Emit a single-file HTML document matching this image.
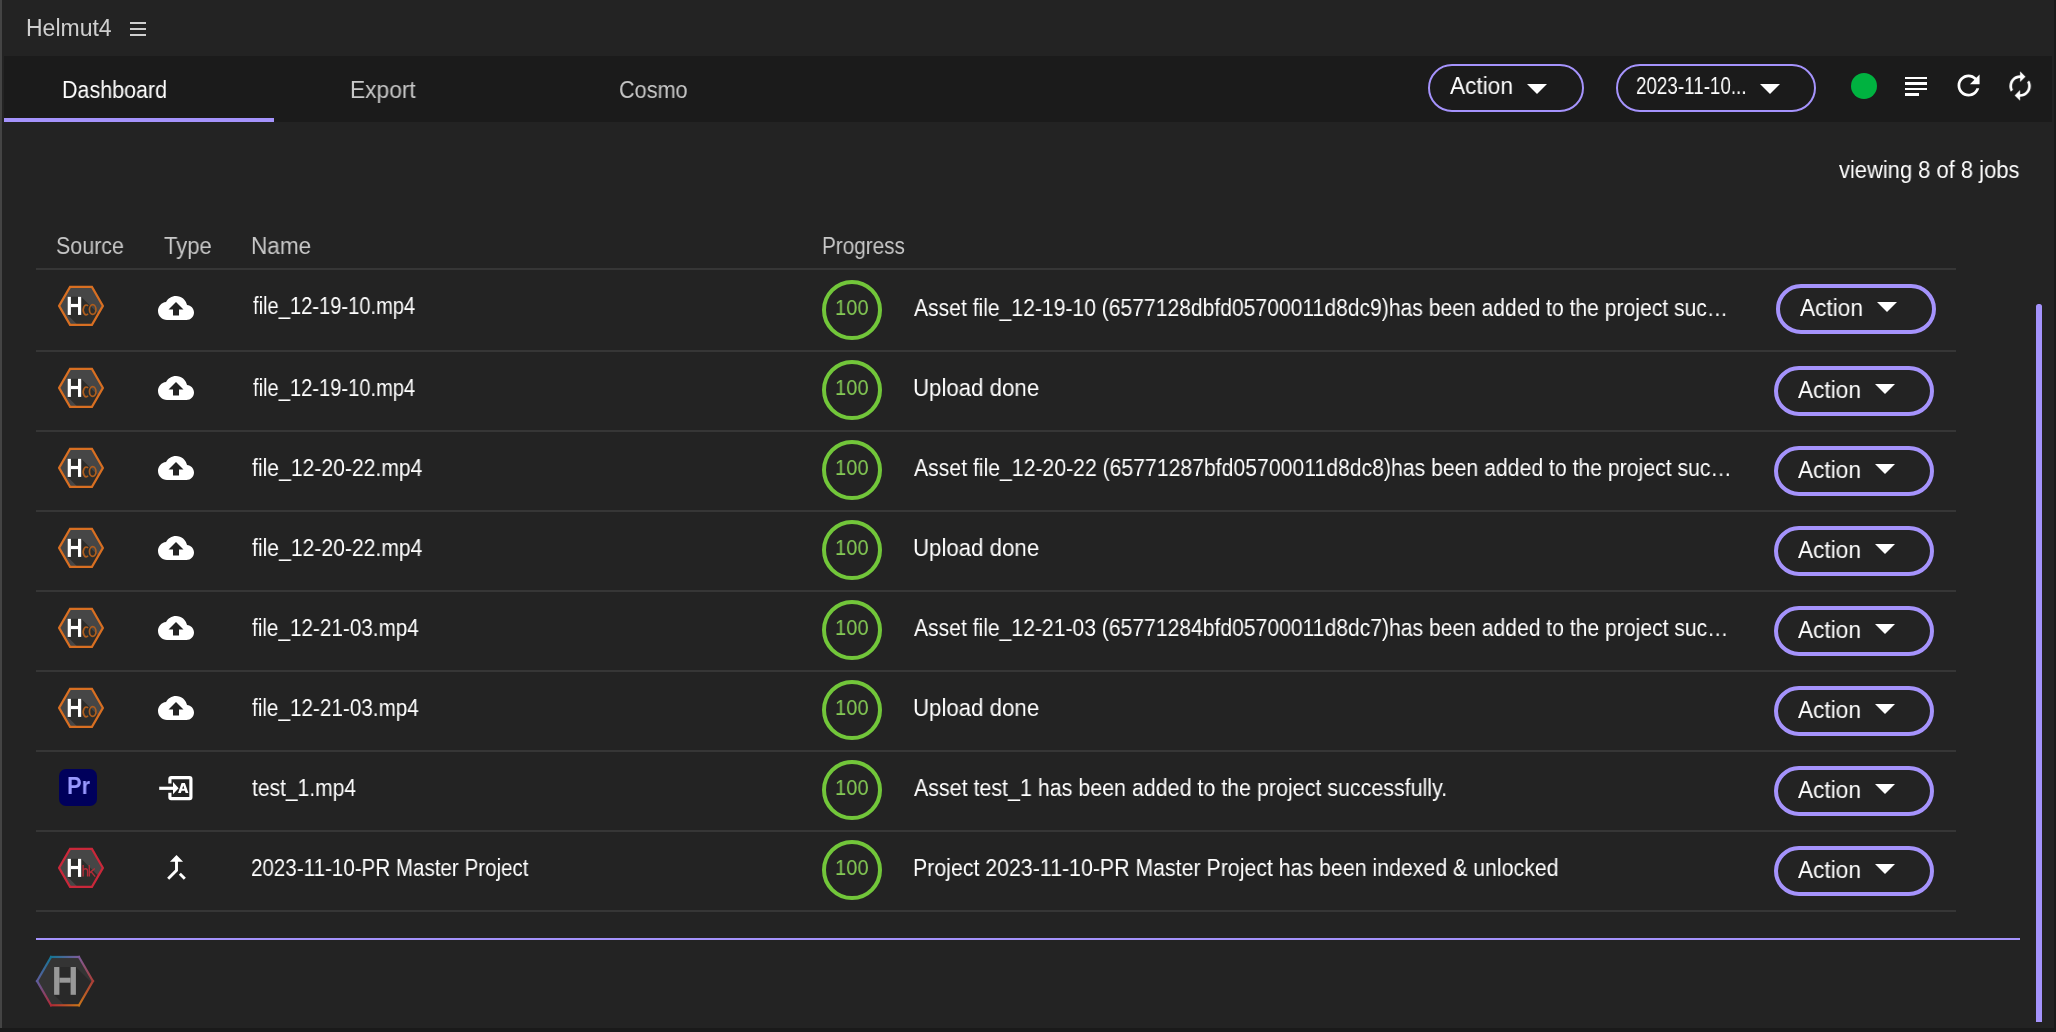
<!DOCTYPE html>
<html><head><meta charset="utf-8"><style>
html,body{margin:0;padding:0;background:#1a1a1a;width:2056px;height:1032px;overflow:hidden}
.panel{position:absolute;left:0;top:0;width:2054px;height:1028px;background:#232323}
.t{position:absolute;white-space:nowrap;font-family:"Liberation Sans",sans-serif;transform-origin:0 0;will-change:transform}
.a{position:absolute;overflow:visible;will-change:transform}
.btn{position:absolute;border-style:solid;border-color:#a593fc;box-sizing:content-box}
.tri{position:absolute;width:0;height:0;border-left:10px solid transparent;border-right:10px solid transparent;border-top:10.5px solid #fff}
.div{position:absolute;left:36px;width:1920px;height:2px;background:#363636}
</style></head><body>
<div class="panel"></div>
<div style="position:absolute;left:0;top:0;width:2px;height:1028px;background:#444"></div>
<div style="position:absolute;left:4px;top:56px;width:2048px;height:66px;background:#1b1b1b"></div>
<div style="position:absolute;left:4px;top:118px;width:270px;height:4px;background:#a593fc"></div>
<div class="t" style="left:25.84px;top:16.53px;font-size:23px;line-height:23px;color:#cfcfcf;transform:scaleX(1.0001);" id="helmut">Helmut4</div>
<div style="position:absolute;left:130px;top:22px;width:16px;height:2px;background:#cfcfcf"></div>
<div style="position:absolute;left:130px;top:28px;width:16px;height:2px;background:#cfcfcf"></div>
<div style="position:absolute;left:130px;top:34px;width:16px;height:2px;background:#cfcfcf"></div>
<div class="t" style="left:61.8px;top:78.53px;font-size:23px;line-height:23px;color:#fff;transform:scaleX(0.9336);" id="dash">Dashboard</div>
<div class="t" style="left:350.47px;top:78.53px;font-size:23px;line-height:23px;color:#c8c8c8;transform:scaleX(0.9889);" id="export">Export</div>
<div class="t" style="left:619.39px;top:78.53px;font-size:23px;line-height:23px;color:#c8c8c8;transform:scaleX(0.9413);" id="cosmo">Cosmo</div>
<div class="btn" style="left:1428px;top:64px;width:152px;height:44px;border-width:2px;border-radius:24.0px"></div>
<div class="t" style="left:1450.4px;top:74.53px;font-size:23px;line-height:23px;color:#fff;transform:scaleX(0.9845);" id="hact">Action</div>
<div class="tri" style="left:1527px;top:83.5px"></div>
<div class="btn" style="left:1616px;top:64px;width:196px;height:44px;border-width:2px;border-radius:24.0px"></div>
<div class="t" style="left:1636.32px;top:74.53px;font-size:23px;line-height:23px;color:#fff;transform:scaleX(0.8181);" id="hdate">2023-11-10...</div>
<div class="tri" style="left:1760px;top:83.5px"></div>
<div style="position:absolute;left:1851px;top:73px;width:26px;height:26px;border-radius:50%;background:#00b240"></div>
<div style="position:absolute;left:1905px;top:76.6px;width:22px;height:2.5px;background:#fff"></div>
<div style="position:absolute;left:1905px;top:82.2px;width:22px;height:2.5px;background:#fff"></div>
<div style="position:absolute;left:1905px;top:87.6px;width:22px;height:2.5px;background:#fff"></div>
<div style="position:absolute;left:1905px;top:93.1px;width:14px;height:2.5px;background:#fff"></div>
<svg class="a" style="left:1951.7px;top:69.4px;" width="33.1" height="33.1" viewBox="0 0 24 24"><path d="M17.65 6.35C16.2 4.9 14.21 4 12 4c-4.42 0-7.99 3.58-7.99 8s3.57 8 7.99 8c3.73 0 6.84-2.55 7.73-6h-2.08c-.82 2.33-3.04 4-5.65 4-3.31 0-6-2.69-6-6s2.69-6 6-6c1.66 0 3.14.69 4.22 1.78L13 11h7V4l-2.35 2.35z" fill="#fff"/></svg>
<svg class="a" style="left:2003.8px;top:69.9px;transform:scaleX(-1)" width="32.2" height="32.2" viewBox="0 0 24 24"><path d="M12 4V1L8 5l4 4V6c3.31 0 6 2.69 6 6 0 1.01-.25 1.97-.7 2.8l1.46 1.46C19.54 15.03 20 13.57 20 12c0-4.42-3.58-8-8-8zm0 14c-3.31 0-6-2.69-6-6 0-1.01.25-1.97.7-2.8L5.24 7.74C4.46 8.97 4 10.43 4 12c0 4.42 3.58 8 8 8v3l4-4-4-4v3z" fill="#fff"/></svg>
<div class="t" style="left:1839.0px;top:158.53px;font-size:23px;line-height:23px;color:#fff;transform:scaleX(0.9533);" id="viewing">viewing 8 of 8 jobs</div>
<div class="t" style="left:55.6px;top:234.53px;font-size:23px;line-height:23px;color:#c8c8c8;transform:scaleX(0.9328);" id="hsrc">Source</div>
<div class="t" style="left:164.0px;top:234.53px;font-size:23px;line-height:23px;color:#c8c8c8;transform:scaleX(0.9586);" id="htype">Type</div>
<div class="t" style="left:251.38px;top:234.53px;font-size:23px;line-height:23px;color:#c8c8c8;transform:scaleX(0.981);" id="hname">Name</div>
<div class="t" style="left:821.76px;top:234.53px;font-size:23px;line-height:23px;color:#c8c8c8;transform:scaleX(0.9011);" id="hprog">Progress</div>
<div class="div" style="top:268px"></div>
<div class="div" style="top:350px"></div>
<svg class="a" style="left:55.00px;top:283.08px" width="52.00" height="45.84"><defs><clipPath id="c306"><polygon points="4.10,22.92 15.05,3.95 36.95,3.95 47.90,22.92 36.95,41.88 15.05,41.88"/></clipPath></defs><polygon points="4.10,22.92 15.05,3.95 36.95,3.95 47.90,22.92 36.95,41.88 15.05,41.88" fill="#464646"/><polygon points="12.70,13.82 26.20,13.82 66.20,53.82 52.70,71.92 12.70,31.92" fill="#2d2d2b" clip-path="url(#c306)"/><polygon points="4.10,22.92 15.05,3.95 36.95,3.95 47.90,22.92 36.95,41.88 15.05,41.88" fill="none" stroke="#d86f22" stroke-width="2.2" stroke-linejoin="miter"/><rect x="12.70" y="13.82" width="3.20" height="18.10" fill="#fff"/><rect x="23.00" y="13.82" width="3.20" height="18.10" fill="#fff"/><rect x="15.90" y="20.92" width="7.10" height="3.20" fill="#fff"/><path d="M33.00,23.12 A2.9,4.9 0 1 0 33.00,30.72" fill="none" stroke="#ad5d1d" stroke-width="1.7"/><ellipse cx="37.70" cy="26.57" rx="3.25" ry="4.9" fill="none" stroke="#ad5d1d" stroke-width="1.7"/></svg>
<svg class="a" style="left:157.8px;top:290px;" width="36" height="36" viewBox="0 0 24 24"><path d="M19.35 10.04C18.67 6.59 15.64 4 12 4 9.11 4 6.6 5.64 5.35 8.04 2.34 8.36 0 10.91 0 14c0 3.31 2.69 6 6 6h13c2.76 0 5-2.24 5-5 0-2.64-2.05-4.78-4.65-4.96zM14 13v4h-4v-4H7l5-5 5 5h-3z" fill="#fff"/></svg>
<div class="t" style="left:252.59px;top:294.53px;font-size:23px;line-height:23px;color:#fff;transform:scaleX(0.8749);" id="name0">file_12-19-10.mp4</div>
<div style="position:absolute;left:822px;top:280px;width:52px;height:52px;border:4px solid #72c63a;border-radius:50%"></div>
<div class="t" style="left:834.89px;top:297.17px;font-size:22px;line-height:22px;color:#86cc55;transform:scaleX(0.9149);" id="pct0">100</div>
<div class="t" style="left:914.3px;top:296.53px;font-size:23px;line-height:23px;color:#fff;transform:scaleX(0.9176);" id="msg0">Asset file_12-19-10 (6577128dbfd05700011d8dc9)has been added to the project suc…</div>
<div class="btn" style="left:1776px;top:284px;width:152px;height:42px;border-width:4px;border-radius:25.0px"></div>
<div class="t" style="left:1800.0px;top:296.53px;font-size:23px;line-height:23px;color:#fff;transform:scaleX(0.9846);" id="ract0">Action</div>
<div class="tri" style="left:1877px;top:302px"></div>
<div class="div" style="top:430px"></div>
<svg class="a" style="left:55.00px;top:365.08px" width="52.00" height="45.84"><defs><clipPath id="c388"><polygon points="4.10,22.92 15.05,3.95 36.95,3.95 47.90,22.92 36.95,41.88 15.05,41.88"/></clipPath></defs><polygon points="4.10,22.92 15.05,3.95 36.95,3.95 47.90,22.92 36.95,41.88 15.05,41.88" fill="#464646"/><polygon points="12.70,13.82 26.20,13.82 66.20,53.82 52.70,71.92 12.70,31.92" fill="#2d2d2b" clip-path="url(#c388)"/><polygon points="4.10,22.92 15.05,3.95 36.95,3.95 47.90,22.92 36.95,41.88 15.05,41.88" fill="none" stroke="#d86f22" stroke-width="2.2" stroke-linejoin="miter"/><rect x="12.70" y="13.82" width="3.20" height="18.10" fill="#fff"/><rect x="23.00" y="13.82" width="3.20" height="18.10" fill="#fff"/><rect x="15.90" y="20.92" width="7.10" height="3.20" fill="#fff"/><path d="M33.00,23.12 A2.9,4.9 0 1 0 33.00,30.72" fill="none" stroke="#ad5d1d" stroke-width="1.7"/><ellipse cx="37.70" cy="26.57" rx="3.25" ry="4.9" fill="none" stroke="#ad5d1d" stroke-width="1.7"/></svg>
<svg class="a" style="left:157.8px;top:370px;" width="36" height="36" viewBox="0 0 24 24"><path d="M19.35 10.04C18.67 6.59 15.64 4 12 4 9.11 4 6.6 5.64 5.35 8.04 2.34 8.36 0 10.91 0 14c0 3.31 2.69 6 6 6h13c2.76 0 5-2.24 5-5 0-2.64-2.05-4.78-4.65-4.96zM14 13v4h-4v-4H7l5-5 5 5h-3z" fill="#fff"/></svg>
<div class="t" style="left:252.59px;top:376.53px;font-size:23px;line-height:23px;color:#fff;transform:scaleX(0.8749);" id="name1">file_12-19-10.mp4</div>
<div style="position:absolute;left:822px;top:360px;width:52px;height:52px;border:4px solid #72c63a;border-radius:50%"></div>
<div class="t" style="left:834.89px;top:377.17px;font-size:22px;line-height:22px;color:#86cc55;transform:scaleX(0.9149);" id="pct1">100</div>
<div class="t" style="left:913.27px;top:376.53px;font-size:23px;line-height:23px;color:#fff;transform:scaleX(0.9672);" id="msg1">Upload done</div>
<div class="btn" style="left:1774px;top:366px;width:152px;height:42px;border-width:4px;border-radius:25.0px"></div>
<div class="t" style="left:1798.0px;top:378.53px;font-size:23px;line-height:23px;color:#fff;transform:scaleX(0.9846);" id="ract1">Action</div>
<div class="tri" style="left:1875px;top:384px"></div>
<div class="div" style="top:510px"></div>
<svg class="a" style="left:55.00px;top:445.08px" width="52.00" height="45.84"><defs><clipPath id="c468"><polygon points="4.10,22.92 15.05,3.95 36.95,3.95 47.90,22.92 36.95,41.88 15.05,41.88"/></clipPath></defs><polygon points="4.10,22.92 15.05,3.95 36.95,3.95 47.90,22.92 36.95,41.88 15.05,41.88" fill="#464646"/><polygon points="12.70,13.82 26.20,13.82 66.20,53.82 52.70,71.92 12.70,31.92" fill="#2d2d2b" clip-path="url(#c468)"/><polygon points="4.10,22.92 15.05,3.95 36.95,3.95 47.90,22.92 36.95,41.88 15.05,41.88" fill="none" stroke="#d86f22" stroke-width="2.2" stroke-linejoin="miter"/><rect x="12.70" y="13.82" width="3.20" height="18.10" fill="#fff"/><rect x="23.00" y="13.82" width="3.20" height="18.10" fill="#fff"/><rect x="15.90" y="20.92" width="7.10" height="3.20" fill="#fff"/><path d="M33.00,23.12 A2.9,4.9 0 1 0 33.00,30.72" fill="none" stroke="#ad5d1d" stroke-width="1.7"/><ellipse cx="37.70" cy="26.57" rx="3.25" ry="4.9" fill="none" stroke="#ad5d1d" stroke-width="1.7"/></svg>
<svg class="a" style="left:157.8px;top:450px;" width="36" height="36" viewBox="0 0 24 24"><path d="M19.35 10.04C18.67 6.59 15.64 4 12 4 9.11 4 6.6 5.64 5.35 8.04 2.34 8.36 0 10.91 0 14c0 3.31 2.69 6 6 6h13c2.76 0 5-2.24 5-5 0-2.64-2.05-4.78-4.65-4.96zM14 13v4h-4v-4H7l5-5 5 5h-3z" fill="#fff"/></svg>
<div class="t" style="left:252.0px;top:456.53px;font-size:23px;line-height:23px;color:#fff;transform:scaleX(0.9192);" id="name2">file_12-20-22.mp4</div>
<div style="position:absolute;left:822px;top:440px;width:52px;height:52px;border:4px solid #72c63a;border-radius:50%"></div>
<div class="t" style="left:834.89px;top:457.17px;font-size:22px;line-height:22px;color:#86cc55;transform:scaleX(0.9149);" id="pct2">100</div>
<div class="t" style="left:914.3px;top:456.53px;font-size:23px;line-height:23px;color:#fff;transform:scaleX(0.9218);" id="msg2">Asset file_12-20-22 (65771287bfd05700011d8dc8)has been added to the project suc…</div>
<div class="btn" style="left:1774px;top:446px;width:152px;height:42px;border-width:4px;border-radius:25.0px"></div>
<div class="t" style="left:1798.0px;top:458.53px;font-size:23px;line-height:23px;color:#fff;transform:scaleX(0.9846);" id="ract2">Action</div>
<div class="tri" style="left:1875px;top:464px"></div>
<div class="div" style="top:590px"></div>
<svg class="a" style="left:55.00px;top:525.08px" width="52.00" height="45.84"><defs><clipPath id="c548"><polygon points="4.10,22.92 15.05,3.95 36.95,3.95 47.90,22.92 36.95,41.88 15.05,41.88"/></clipPath></defs><polygon points="4.10,22.92 15.05,3.95 36.95,3.95 47.90,22.92 36.95,41.88 15.05,41.88" fill="#464646"/><polygon points="12.70,13.82 26.20,13.82 66.20,53.82 52.70,71.92 12.70,31.92" fill="#2d2d2b" clip-path="url(#c548)"/><polygon points="4.10,22.92 15.05,3.95 36.95,3.95 47.90,22.92 36.95,41.88 15.05,41.88" fill="none" stroke="#d86f22" stroke-width="2.2" stroke-linejoin="miter"/><rect x="12.70" y="13.82" width="3.20" height="18.10" fill="#fff"/><rect x="23.00" y="13.82" width="3.20" height="18.10" fill="#fff"/><rect x="15.90" y="20.92" width="7.10" height="3.20" fill="#fff"/><path d="M33.00,23.12 A2.9,4.9 0 1 0 33.00,30.72" fill="none" stroke="#ad5d1d" stroke-width="1.7"/><ellipse cx="37.70" cy="26.57" rx="3.25" ry="4.9" fill="none" stroke="#ad5d1d" stroke-width="1.7"/></svg>
<svg class="a" style="left:157.8px;top:530px;" width="36" height="36" viewBox="0 0 24 24"><path d="M19.35 10.04C18.67 6.59 15.64 4 12 4 9.11 4 6.6 5.64 5.35 8.04 2.34 8.36 0 10.91 0 14c0 3.31 2.69 6 6 6h13c2.76 0 5-2.24 5-5 0-2.64-2.05-4.78-4.65-4.96zM14 13v4h-4v-4H7l5-5 5 5h-3z" fill="#fff"/></svg>
<div class="t" style="left:252.0px;top:536.53px;font-size:23px;line-height:23px;color:#fff;transform:scaleX(0.9192);" id="name3">file_12-20-22.mp4</div>
<div style="position:absolute;left:822px;top:520px;width:52px;height:52px;border:4px solid #72c63a;border-radius:50%"></div>
<div class="t" style="left:834.89px;top:537.17px;font-size:22px;line-height:22px;color:#86cc55;transform:scaleX(0.9149);" id="pct3">100</div>
<div class="t" style="left:913.27px;top:536.53px;font-size:23px;line-height:23px;color:#fff;transform:scaleX(0.9672);" id="msg3">Upload done</div>
<div class="btn" style="left:1774px;top:526px;width:152px;height:42px;border-width:4px;border-radius:25.0px"></div>
<div class="t" style="left:1798.0px;top:538.53px;font-size:23px;line-height:23px;color:#fff;transform:scaleX(0.9846);" id="ract3">Action</div>
<div class="tri" style="left:1875px;top:544px"></div>
<div class="div" style="top:670px"></div>
<svg class="a" style="left:55.00px;top:605.08px" width="52.00" height="45.84"><defs><clipPath id="c628"><polygon points="4.10,22.92 15.05,3.95 36.95,3.95 47.90,22.92 36.95,41.88 15.05,41.88"/></clipPath></defs><polygon points="4.10,22.92 15.05,3.95 36.95,3.95 47.90,22.92 36.95,41.88 15.05,41.88" fill="#464646"/><polygon points="12.70,13.82 26.20,13.82 66.20,53.82 52.70,71.92 12.70,31.92" fill="#2d2d2b" clip-path="url(#c628)"/><polygon points="4.10,22.92 15.05,3.95 36.95,3.95 47.90,22.92 36.95,41.88 15.05,41.88" fill="none" stroke="#d86f22" stroke-width="2.2" stroke-linejoin="miter"/><rect x="12.70" y="13.82" width="3.20" height="18.10" fill="#fff"/><rect x="23.00" y="13.82" width="3.20" height="18.10" fill="#fff"/><rect x="15.90" y="20.92" width="7.10" height="3.20" fill="#fff"/><path d="M33.00,23.12 A2.9,4.9 0 1 0 33.00,30.72" fill="none" stroke="#ad5d1d" stroke-width="1.7"/><ellipse cx="37.70" cy="26.57" rx="3.25" ry="4.9" fill="none" stroke="#ad5d1d" stroke-width="1.7"/></svg>
<svg class="a" style="left:157.8px;top:610px;" width="36" height="36" viewBox="0 0 24 24"><path d="M19.35 10.04C18.67 6.59 15.64 4 12 4 9.11 4 6.6 5.64 5.35 8.04 2.34 8.36 0 10.91 0 14c0 3.31 2.69 6 6 6h13c2.76 0 5-2.24 5-5 0-2.64-2.05-4.78-4.65-4.96zM14 13v4h-4v-4H7l5-5 5 5h-3z" fill="#fff"/></svg>
<div class="t" style="left:252.0px;top:616.53px;font-size:23px;line-height:23px;color:#fff;transform:scaleX(0.8997);" id="name4">file_12-21-03.mp4</div>
<div style="position:absolute;left:822px;top:600px;width:52px;height:52px;border:4px solid #72c63a;border-radius:50%"></div>
<div class="t" style="left:834.89px;top:617.17px;font-size:22px;line-height:22px;color:#86cc55;transform:scaleX(0.9149);" id="pct4">100</div>
<div class="t" style="left:914.3px;top:616.53px;font-size:23px;line-height:23px;color:#fff;transform:scaleX(0.918);" id="msg4">Asset file_12-21-03 (65771284bfd05700011d8dc7)has been added to the project suc…</div>
<div class="btn" style="left:1774px;top:606px;width:152px;height:42px;border-width:4px;border-radius:25.0px"></div>
<div class="t" style="left:1798.0px;top:618.53px;font-size:23px;line-height:23px;color:#fff;transform:scaleX(0.9846);" id="ract4">Action</div>
<div class="tri" style="left:1875px;top:624px"></div>
<div class="div" style="top:750px"></div>
<svg class="a" style="left:55.00px;top:685.08px" width="52.00" height="45.84"><defs><clipPath id="c708"><polygon points="4.10,22.92 15.05,3.95 36.95,3.95 47.90,22.92 36.95,41.88 15.05,41.88"/></clipPath></defs><polygon points="4.10,22.92 15.05,3.95 36.95,3.95 47.90,22.92 36.95,41.88 15.05,41.88" fill="#464646"/><polygon points="12.70,13.82 26.20,13.82 66.20,53.82 52.70,71.92 12.70,31.92" fill="#2d2d2b" clip-path="url(#c708)"/><polygon points="4.10,22.92 15.05,3.95 36.95,3.95 47.90,22.92 36.95,41.88 15.05,41.88" fill="none" stroke="#d86f22" stroke-width="2.2" stroke-linejoin="miter"/><rect x="12.70" y="13.82" width="3.20" height="18.10" fill="#fff"/><rect x="23.00" y="13.82" width="3.20" height="18.10" fill="#fff"/><rect x="15.90" y="20.92" width="7.10" height="3.20" fill="#fff"/><path d="M33.00,23.12 A2.9,4.9 0 1 0 33.00,30.72" fill="none" stroke="#ad5d1d" stroke-width="1.7"/><ellipse cx="37.70" cy="26.57" rx="3.25" ry="4.9" fill="none" stroke="#ad5d1d" stroke-width="1.7"/></svg>
<svg class="a" style="left:157.8px;top:690px;" width="36" height="36" viewBox="0 0 24 24"><path d="M19.35 10.04C18.67 6.59 15.64 4 12 4 9.11 4 6.6 5.64 5.35 8.04 2.34 8.36 0 10.91 0 14c0 3.31 2.69 6 6 6h13c2.76 0 5-2.24 5-5 0-2.64-2.05-4.78-4.65-4.96zM14 13v4h-4v-4H7l5-5 5 5h-3z" fill="#fff"/></svg>
<div class="t" style="left:252.0px;top:696.53px;font-size:23px;line-height:23px;color:#fff;transform:scaleX(0.8997);" id="name5">file_12-21-03.mp4</div>
<div style="position:absolute;left:822px;top:680px;width:52px;height:52px;border:4px solid #72c63a;border-radius:50%"></div>
<div class="t" style="left:834.89px;top:697.17px;font-size:22px;line-height:22px;color:#86cc55;transform:scaleX(0.9149);" id="pct5">100</div>
<div class="t" style="left:913.27px;top:696.53px;font-size:23px;line-height:23px;color:#fff;transform:scaleX(0.9672);" id="msg5">Upload done</div>
<div class="btn" style="left:1774px;top:686px;width:152px;height:42px;border-width:4px;border-radius:25.0px"></div>
<div class="t" style="left:1798.0px;top:698.53px;font-size:23px;line-height:23px;color:#fff;transform:scaleX(0.9846);" id="ract5">Action</div>
<div class="tri" style="left:1875px;top:704px"></div>
<div class="div" style="top:830px"></div>
<div style="position:absolute;left:59px;top:769px;width:38px;height:37px;border-radius:7px;background:#00005b"></div>
<div class="t" style="left:67.3px;top:772.8px;font-size:23.5px;line-height:26px;font-weight:bold;color:#9999ff;transform:scaleX(0.93)">Pr</div>
<svg class="a" style="left:150px;top:770.70px" width="50" height="35"><path d="M19.9 12.4 V7.9 Q19.9 6.6 21.2 6.6 H39.6 Q40.9 6.6 40.9 7.9 V26.3 Q40.9 27.6 39.6 27.6 H21.2 Q19.9 27.6 19.9 26.3 V21.8" fill="none" stroke="#fff" stroke-width="3.2"/><rect x="9.2" y="15.7" width="14.5" height="3.2" fill="#fff"/><polygon points="23,11.1 28.6,17.3 23,23.3" fill="#fff"/><path d="M28.1,22 L31.6,12 L34.9,12 L38.4,22 L35.6,22 L34.9,19.8 L31.6,19.8 L30.9,22 Z M32.2,17.8 L34.3,17.8 L33.25,14.5 Z" fill="#fff" fill-rule="evenodd"/></svg>
<div class="t" style="left:252.19px;top:776.53px;font-size:23px;line-height:23px;color:#fff;transform:scaleX(0.9142);" id="name6">test_1.mp4</div>
<div style="position:absolute;left:822px;top:760px;width:52px;height:52px;border:4px solid #72c63a;border-radius:50%"></div>
<div class="t" style="left:834.89px;top:777.17px;font-size:22px;line-height:22px;color:#86cc55;transform:scaleX(0.9149);" id="pct6">100</div>
<div class="t" style="left:914.3px;top:776.53px;font-size:23px;line-height:23px;color:#fff;transform:scaleX(0.9314);" id="msg6">Asset test_1 has been added to the project successfully.</div>
<div class="btn" style="left:1774px;top:766px;width:152px;height:42px;border-width:4px;border-radius:25.0px"></div>
<div class="t" style="left:1798.0px;top:778.53px;font-size:23px;line-height:23px;color:#fff;transform:scaleX(0.9846);" id="ract6">Action</div>
<div class="tri" style="left:1875px;top:784px"></div>
<div class="div" style="top:910px"></div>
<svg class="a" style="left:55.00px;top:845.08px" width="52.00" height="45.84"><defs><clipPath id="c868"><polygon points="4.10,22.92 15.05,3.95 36.95,3.95 47.90,22.92 36.95,41.88 15.05,41.88"/></clipPath></defs><polygon points="4.10,22.92 15.05,3.95 36.95,3.95 47.90,22.92 36.95,41.88 15.05,41.88" fill="#464646"/><polygon points="12.70,13.82 26.20,13.82 66.20,53.82 52.70,71.92 12.70,31.92" fill="#2d2d2b" clip-path="url(#c868)"/><polygon points="4.10,22.92 15.05,3.95 36.95,3.95 47.90,22.92 36.95,41.88 15.05,41.88" fill="none" stroke="#c9283a" stroke-width="2.2" stroke-linejoin="miter"/><rect x="12.70" y="13.82" width="3.20" height="18.10" fill="#fff"/><rect x="23.00" y="13.82" width="3.20" height="18.10" fill="#fff"/><rect x="15.90" y="20.92" width="7.10" height="3.20" fill="#fff"/><path d="M28.10,19.92 V31.62 M28.10,25.52 Q28.60,23.72 30.60,23.72 Q32.60,23.72 32.60,25.92 V31.62" fill="none" stroke="#b12c38" stroke-width="1.4"/><path d="M34.30,19.92 V31.62 M34.30,28.12 L39.80,23.52 M36.20,26.72 L40.20,31.62" fill="none" stroke="#b12c38" stroke-width="1.4"/></svg>
<svg class="a" style="left:159px;top:850px;" width="35" height="35" viewBox="0 0 24 24"><path d="M17 20.41L18.41 19 15 15.59 13.59 17 17 20.41zM7.5 8H11v5.59L5.59 19 7 20.41l6-6V8h3.5L12 3.5 7.5 8z" fill="#fff"/></svg>
<div class="t" style="left:251.22px;top:856.53px;font-size:23px;line-height:23px;color:#fff;transform:scaleX(0.8945);" id="name7">2023-11-10-PR Master Project</div>
<div style="position:absolute;left:822px;top:840px;width:52px;height:52px;border:4px solid #72c63a;border-radius:50%"></div>
<div class="t" style="left:834.89px;top:857.17px;font-size:22px;line-height:22px;color:#86cc55;transform:scaleX(0.9149);" id="pct7">100</div>
<div class="t" style="left:913.3px;top:856.53px;font-size:23px;line-height:23px;color:#fff;transform:scaleX(0.9271);" id="msg7">Project 2023-11-10-PR Master Project has been indexed &amp; unlocked</div>
<div class="btn" style="left:1774px;top:846px;width:152px;height:42px;border-width:4px;border-radius:25.0px"></div>
<div class="t" style="left:1798.0px;top:858.53px;font-size:23px;line-height:23px;color:#fff;transform:scaleX(0.9846);" id="ract7">Action</div>
<div class="tri" style="left:1875px;top:864px"></div>
<div style="position:absolute;left:36px;top:938px;width:1984px;height:2px;background:#a593fc"></div>
<div style="position:absolute;left:2036px;top:304px;width:6px;height:718px;border-radius:2.5px 2.5px 0 0;background:#a593fc"></div>
<svg class="a" style="left:33.00px;top:952.89px" width="64" height="56.23">
<defs><linearGradient id="e0" gradientUnits="userSpaceOnUse" x1="4.10" y1="28.11" x2="18.05" y2="3.95"><stop offset="0" stop-color="#5e5c9c"/><stop offset="1" stop-color="#157594"/></linearGradient><linearGradient id="e1" gradientUnits="userSpaceOnUse" x1="18.05" y1="3.95" x2="45.95" y2="3.95"><stop offset="0" stop-color="#157594"/><stop offset="1" stop-color="#7d5c9a"/></linearGradient><linearGradient id="e2" gradientUnits="userSpaceOnUse" x1="45.95" y1="3.95" x2="59.90" y2="28.11"><stop offset="0" stop-color="#7d5c9a"/><stop offset="1" stop-color="#a83d37"/></linearGradient><linearGradient id="e3" gradientUnits="userSpaceOnUse" x1="59.90" y1="28.11" x2="45.95" y2="52.28"><stop offset="0" stop-color="#a83d37"/><stop offset="1" stop-color="#c8741a"/></linearGradient><linearGradient id="e4" gradientUnits="userSpaceOnUse" x1="45.95" y1="52.28" x2="18.05" y2="52.28"><stop offset="0" stop-color="#c8741a"/><stop offset="1" stop-color="#b02a37"/></linearGradient><linearGradient id="e5" gradientUnits="userSpaceOnUse" x1="18.05" y1="52.28" x2="4.10" y2="28.11"><stop offset="0" stop-color="#b02a37"/><stop offset="1" stop-color="#5e5c9c"/></linearGradient><clipPath id="cb"><polygon points="4.10,28.11 18.05,3.95 45.95,3.95 59.90,28.11 45.95,52.28 18.05,52.28"/></clipPath></defs>
<polygon points="4.10,28.11 18.05,3.95 45.95,3.95 59.90,28.11 45.95,52.28 18.05,52.28" fill="#343434"/>
<polygon points="21.10,14.01 42.90,14.01 87.90,59.01 66.10,86.81 21.10,41.81" fill="#292929" clip-path="url(#cb)"/>
<line x1="4.10" y1="28.11" x2="18.05" y2="3.95" stroke="url(#e0)" stroke-width="2.2" stroke-linecap="square"/><line x1="18.05" y1="3.95" x2="45.95" y2="3.95" stroke="url(#e1)" stroke-width="2.2" stroke-linecap="square"/><line x1="45.95" y1="3.95" x2="59.90" y2="28.11" stroke="url(#e2)" stroke-width="2.2" stroke-linecap="square"/><line x1="59.90" y1="28.11" x2="45.95" y2="52.28" stroke="url(#e3)" stroke-width="2.2" stroke-linecap="square"/><line x1="45.95" y1="52.28" x2="18.05" y2="52.28" stroke="url(#e4)" stroke-width="2.2" stroke-linecap="square"/><line x1="18.05" y1="52.28" x2="4.10" y2="28.11" stroke="url(#e5)" stroke-width="2.2" stroke-linecap="square"/>
<rect x="21.10" y="14.01" width="5.30" height="27.80" fill="#989898"/>
<rect x="37.60" y="14.01" width="5.30" height="27.80" fill="#989898"/>
<rect x="26.40" y="24.71" width="11.20" height="5.00" fill="#989898"/>
</svg>
</body></html>
